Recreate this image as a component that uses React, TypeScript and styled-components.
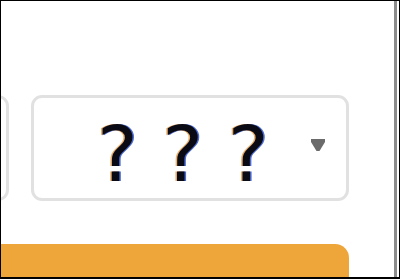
import styled, { createGlobalStyle } from 'styled-components';

const GlobalStyle = createGlobalStyle`
    html, body {
        margin: 0;
        padding: 0;
        background: #fff;
    }
`;

const Viewport = styled.div`
    box-sizing: border-box;
    width: 400px;
    height: 279px;
    border: 1px solid #000;
    border-bottom-width: 2px;
    display: flex;
    overflow: hidden;
    background: #fff;
`;

const Content = styled.div`
    flex: 1;
    display: flex;
    flex-direction: column;
    padding-top: 94px;
    overflow: hidden;
`;

const ScrollEdge = styled.div`
    width: 3px;
    margin-right: 2px;
    background: #8c8c8c;
`;

const SelectRow = styled.div`
    display: flex;
    gap: 22px;
    margin-left: -92px;
`;

const Select = styled.div<{ $width: number }>`
    box-sizing: border-box;
    flex: none;
    width: ${(p) => p.$width}px;
    height: 106px;
    border: 3px solid #e1e1e1;
    border-radius: 11px;
    display: flex;
    align-items: center;
    justify-content: space-between;
    padding: 0 21px 0 63px;
    background: #fff;
`;

const SelectValue = styled.span`
    font-family: 'DejaVu Sans', Verdana, sans-serif;
    font-size: 77px;
    line-height: 1;
    color: #0a0a14;
    white-space: pre;
    margin-top: 13px;
    text-shadow: -1.5px 0 rgba(230, 150, 60, 0.75), 1.5px 0 rgba(30, 70, 200, 0.8);
`;

const Arrow = styled.svg`
    width: 14px;
    height: 14px;
    fill: #6b6b6b;
    margin-top: -6px;
`;

const ActionButton = styled.div`
    margin-top: 43px;
    margin-left: -20px;
    width: 368px;
    height: 70px;
    flex: none;
    background: #eea53a;
    border-radius: 14px;
`;

export default function App() {
    return (
        <>
            <GlobalStyle />
            <Viewport>
                <Content>
                    <SelectRow>
                        <Select $width={100} />
                        <Select $width={318}>
                            <SelectValue>? ? ?</SelectValue>
                            <Arrow viewBox="0 0 14 14">
                                <path d="M0 1 H14 V4 L8.5 13 H5.5 L0 4 Z" />
                            </Arrow>
                        </Select>
                    </SelectRow>
                    <ActionButton />
                </Content>
                <ScrollEdge />
            </Viewport>
        </>
    );
}
